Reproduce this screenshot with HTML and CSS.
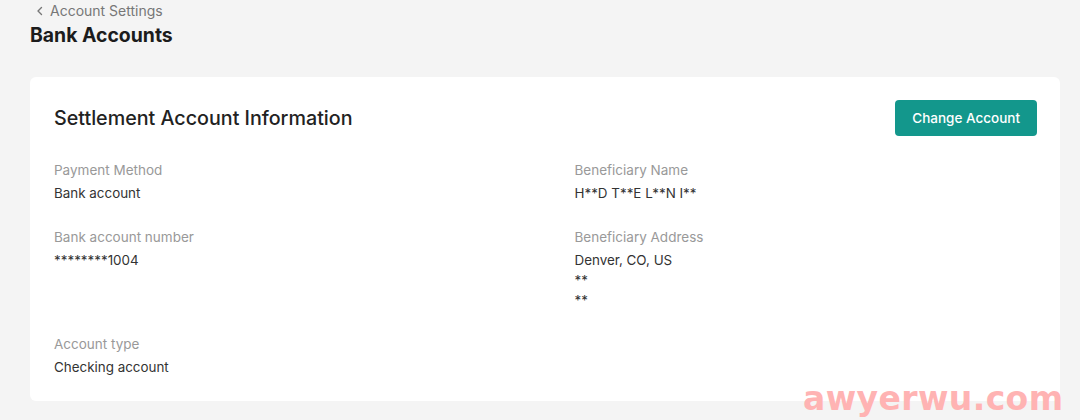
FILE: index.html
```html
<!DOCTYPE html>
<html lang="en">
<head>
    <meta charset="UTF-8" />
    <title>Bank Accounts</title>
    <link rel="stylesheet" href="styles.css">
</head>
<body>
    <div class="page">
        <a class="back" href="#">
            <svg class="back-icon" width="8" height="10" viewBox="0 0 8 10"><path d="M5.5 1.5 2 5l3.5 3.5" fill="none" stroke="#777" stroke-width="1.4" stroke-linecap="round" stroke-linejoin="round"/></svg>
            Account Settings
        </a>
        <h1>Bank Accounts</h1>

        <div class="card">
            <div class="card-head">
                <h2>Settlement Account Information</h2>
                <button class="btn">Change Account</button>
            </div>

            <div class="fields">
                <div class="field">
                    <div class="label">Payment Method</div>
                    <div class="value">Bank account</div>
                </div>
                <div class="field">
                    <div class="label">Beneficiary Name</div>
                    <div class="value">H**D T**E L**N I**</div>
                </div>
                <div class="field">
                    <div class="label">Bank account number</div>
                    <div class="value">********1004</div>
                </div>
                <div class="field">
                    <div class="label">Beneficiary Address</div>
                    <div class="value">Denver, CO, US</div>
                    <div class="value">**</div>
                    <div class="value">**</div>
                </div>
                <div class="field">
                    <div class="label">Account type</div>
                    <div class="value">Checking account</div>
                </div>
            </div>
        </div>
    </div>
    <div class="watermark">awyerwu.com</div>
</body>
</html>
```

FILE: styles.css
```css
body {
    margin: 0;
    background: #f4f4f4;
    font-family: Inter, 'Noto Sans', sans-serif;
    color: #222;
}
.page {
    padding: 1px 20px 20px 30px;
}
.back {
    display: flex;
    align-items: center;
    gap: 6px;
    margin-left: 6px;
    font-size: 14px;
    line-height: 20px;
    color: #777;
    text-decoration: none;
}
h1 {
    margin: 0;
    font-size: 19.4px;
    line-height: 28px;
    font-weight: 700;
    color: #1c1c1c;
}
.card {
    margin-top: 28px;
    background: #fff;
    border-radius: 6px;
    padding: 23px 23px 24px 24px;
}
.card-head {
    display: flex;
    align-items: center;
    justify-content: space-between;
}
h2 {
    margin: 0;
    font-size: 19.7px;
    font-weight: 500;
    color: #222;
}
.btn {
    height: 36px;
    padding: 0 17px;
    border: none;
    border-radius: 4px;
    background: #13978c;
    color: #fff;
    font-family: inherit;
    font-size: 13.5px;
    font-weight: 500;
}
.fields {
    display: grid;
    grid-template-columns: 1fr 1fr;
    column-gap: 58px;
    row-gap: 24px;
    margin-top: 24px;
}
.label {
    font-size: 13.5px;
    line-height: 20px;
    color: #999;
    margin-bottom: 3px;
}
.value {
    font-size: 13.4px;
    line-height: 20px;
    color: #333;
}
.watermark {
    position: absolute;
    left: 803px;
    top: 381px;
    font-family: 'DejaVu Sans', sans-serif;
    font-size: 33px;
    line-height: 36px;
    letter-spacing: 0.4px;
    font-weight: 700;
    color: #ffb3b3;
}
```
